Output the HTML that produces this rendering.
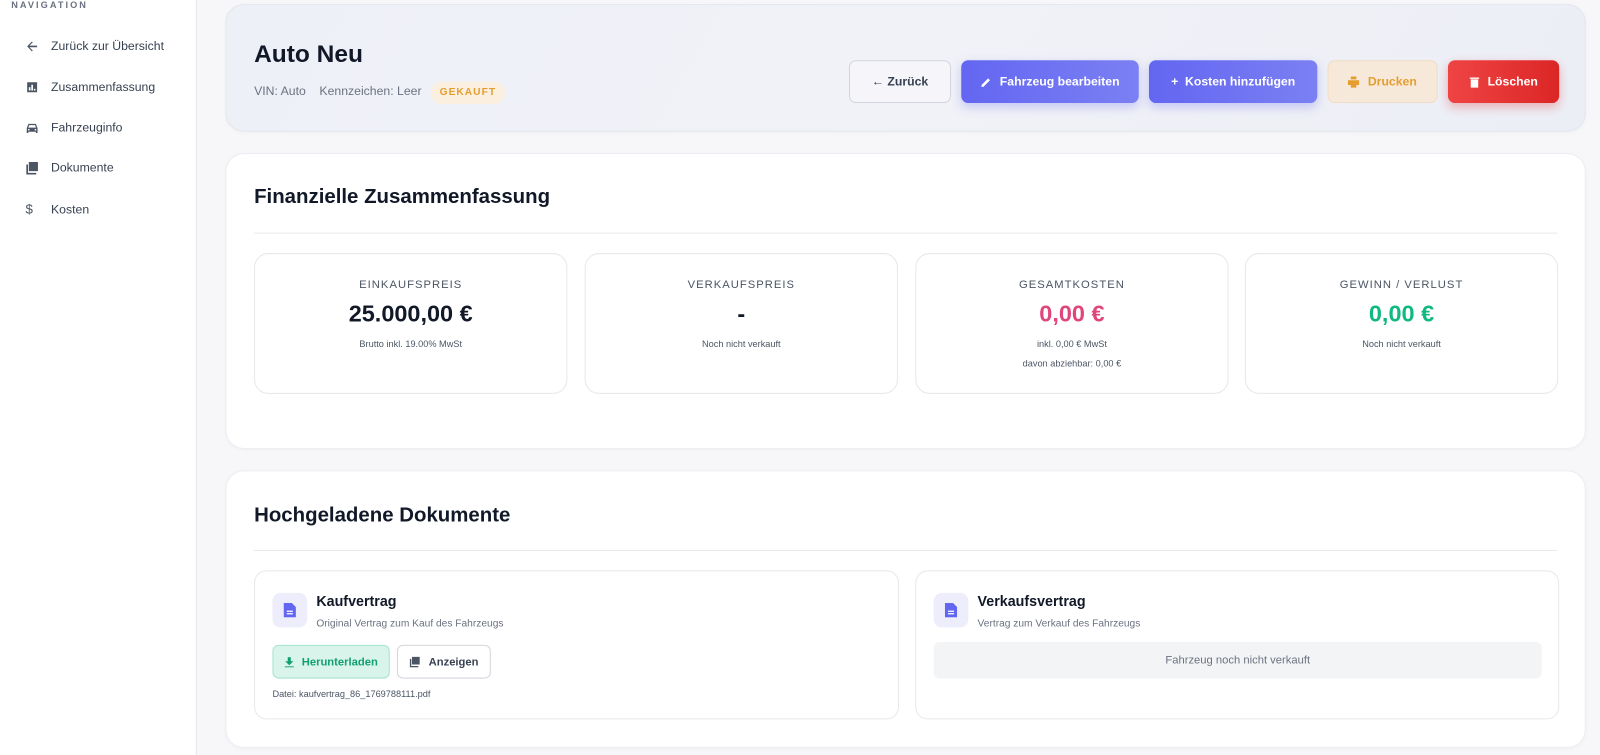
<!DOCTYPE html>
<html><head><meta charset="utf-8"><style>
*{box-sizing:border-box;margin:0;padding:0}
body{width:1600px;height:755px;overflow:hidden;background:#f7f7f9;font-family:"Liberation Sans",Arial,sans-serif;color:#111827}
.wrap{position:absolute;left:0;top:0;width:1568px;height:740px;transform:scale(1.0204);transform-origin:0 0}
.side{position:absolute;left:0;top:0;width:193px;height:740px;background:#fff;border-right:1px solid #e5e7eb}
.nav-h{position:absolute;left:11px;top:0;font-size:9px;font-weight:bold;letter-spacing:2px;color:#6b7280}
.ni{position:absolute;left:25px;font-size:12px;color:#374151;display:flex;align-items:center}
.ni svg{width:13px;height:13px;margin-right:12px;fill:#4b5563}
.card{position:absolute;background:#fff;border:1px solid #eceef2;border-radius:18px;box-shadow:0 1px 4px rgba(0,0,0,.03)}
.hdr{left:221px;top:4px;width:1333px;height:125px;background:linear-gradient(120deg,#eef0f8,#f1f2f7 50%,#eceef6);border:1px solid #e3e5ee}
h1{position:absolute;left:27px;top:35px;font-size:24px;font-weight:bold}
.meta{position:absolute;left:27px;top:77px;font-size:12px;color:#6b7280}
.badge{position:absolute;left:200px;top:75px;width:73px;height:22px;border-radius:11px;background:#fbefe0;color:#e59e2e;font-size:10px;font-weight:bold;letter-spacing:1px;text-align:center;line-height:22px}
.btn{position:absolute;top:54px;height:42px;border-radius:7px;font-size:12px;font-weight:bold;display:flex;align-items:center;justify-content:center;gap:8px}
.sec-t{position:absolute;left:27px;font-size:20px;font-weight:bold}
.hr{position:absolute;left:27px;right:27px;height:1px;background:#e7e8ec}
.stat{position:absolute;top:97px;width:307px;height:138px;border:1px solid #e7e8ec;border-radius:14px;text-align:center}
.stat .l{margin-top:24px;font-size:11px;letter-spacing:1px;color:#4b5563}
.stat .v{margin-top:9px;font-size:23px;font-weight:bold}
.stat .s{margin-top:11px;font-size:9px;color:#4b5563}
.doc{position:absolute;top:97px;width:632px;height:146px;border:1px solid #e7e8ec;border-radius:12px}
.ic{position:absolute;left:17px;top:21px;width:34px;height:34px;border-radius:8px;background:#eeedfc;display:flex;align-items:center;justify-content:center}
.dt{position:absolute;left:60px;top:21px;font-size:14px;font-weight:bold}
.ds{position:absolute;left:60px;top:46px;font-size:10px;color:#6b7280}
</style></head><body><div class="wrap">
<div class="side">
<div class="nav-h">NAVIGATION</div>
<div class="ni" style="top:38px"><svg viewBox="0 0 16 16"><path d="M14 7H4.8l4-4-1.1-1L2 8l5.7 6 1.1-1-4-4H14z"/></svg>Zurück zur Übersicht</div>
<div class="ni" style="top:78px"><svg viewBox="0 0 16 16"><path d="M2 2h12v12H2zM4 8v4h2V8zm3-3v7h2V5zm3 5v2h2v-2z" fill-rule="evenodd"/></svg>Zusammenfassung</div>
<div class="ni" style="top:118px"><svg viewBox="0 0 16 16"><path d="M3.5 3h9l2 5v6h-2v-1.5h-9V14h-2V8zm1 1.5L3.3 7.5h9.4l-1.2-3zM4 9a1 1 0 100 2 1 1 0 000-2zm8 0a1 1 0 100 2 1 1 0 000-2z"/></svg>Fahrzeuginfo</div>
<div class="ni" style="top:157px"><svg viewBox="0 0 16 16"><path d="M4 1h11v11H4zM1 4h2v10h10v2H1z"/></svg>Dokumente</div>
<div class="ni" style="top:197px"><span style="width:13px;margin-right:12px;font-size:13px;color:#4b5563">$</span>Kosten</div>
</div>

<div class="card hdr">
<h1>Auto Neu</h1>
<div class="meta">VIN: Auto &nbsp;&nbsp; Kennzeichen: Leer</div>
<div class="badge">GEKAUFT</div>
<div class="btn" style="left:610px;width:100px;background:#f6f6fa;border:1px solid #d4d6dd;color:#374151">← Zurück</div>
<div class="btn" style="left:720px;width:174px;background:linear-gradient(90deg,#6366f1,#7b80f3);color:#fff;box-shadow:0 4px 10px rgba(99,102,241,.3)"><svg width="11" height="11" viewBox="0 0 12 12"><path d="M1 9l7-7 2 2-7 7H1z" fill="#fff"/></svg>Fahrzeug bearbeiten</div>
<div class="btn" style="left:904px;width:165px;background:linear-gradient(90deg,#6366f1,#7b80f3);color:#fff;box-shadow:0 4px 10px rgba(99,102,241,.3)">+ &nbsp;Kosten hinzufügen</div>
<div class="btn" style="left:1079px;width:108px;background:#f7e9da;border:1px solid #f0dcc4;color:#e59e2e"><svg width="11" height="11" viewBox="0 0 12 12"><path d="M3 0h6v3H3zM0 4h12v5H9v3H3V9H0z" fill="#e59e2e"/></svg>Drucken</div>
<div class="btn" style="left:1197px;width:109px;background:linear-gradient(90deg,#ef4444,#dc2626);color:#fff;box-shadow:0 4px 10px rgba(220,38,38,.3)"><svg width="10" height="11" viewBox="0 0 10 12"><path d="M0 1h10v1.5H0zM1 3h8v9H1z" fill="#fff"/></svg>Löschen</div>
</div>

<div class="card" style="left:221px;top:150px;width:1333px;height:290px">
<div class="sec-t" style="top:31px">Finanzielle Zusammenfassung</div>
<div class="hr" style="top:77px"></div>
<div class="stat" style="left:27px"><div class="l">EINKAUFSPREIS</div><div class="v">25.000,00 €</div><div class="s">Brutto inkl. 19.00% MwSt</div></div>
<div class="stat" style="left:351px"><div class="l">VERKAUFSPREIS</div><div class="v">-</div><div class="s">Noch nicht verkauft</div></div>
<div class="stat" style="left:675px"><div class="l">GESAMTKOSTEN</div><div class="v" style="color:#e0457b">0,00 €</div><div class="s">inkl. 0,00 € MwSt</div><div class="s" style="margin-top:9px">davon abziehbar: 0,00 €</div></div>
<div class="stat" style="left:998px"><div class="l">GEWINN / VERLUST</div><div class="v" style="color:#10b981">0,00 €</div><div class="s">Noch nicht verkauft</div></div>
</div>

<div class="card" style="left:221px;top:461px;width:1333px;height:272px">
<div class="sec-t" style="top:32px">Hochgeladene Dokumente</div>
<div class="hr" style="top:77px"></div>
<div class="doc" style="left:27px">
<div class="ic"><svg width="12" height="14" viewBox="0 0 12 14"><path d="M0 0h8l4 4v10H0z" fill="#6366f1"/><path d="M3 8h6M3 10.5h6" stroke="#fff" stroke-width="1.2"/></svg></div>
<div class="dt">Kaufvertrag</div><div class="ds">Original Vertrag zum Kauf des Fahrzeugs</div>
<div style="position:absolute;left:17px;top:72px;width:115px;height:33px;border-radius:6px;background:#d9f4ea;border:1px solid #a7e4cc;color:#10a070;font-size:11px;font-weight:bold;display:flex;align-items:center;justify-content:center;gap:8px"><svg width="9" height="10" viewBox="0 0 9 10"><path d="M3 0h3v4h2.5L4.5 8 .5 4H3zM0 9h9v1H0z" fill="#10a070"/></svg>Herunterladen</div>
<div style="position:absolute;left:139px;top:72px;width:92px;height:33px;border-radius:6px;background:#fff;border:1px solid #d4d6dd;color:#374151;font-size:11px;font-weight:bold;display:flex;align-items:center;justify-content:center;gap:8px"><svg width="11" height="11" viewBox="0 0 16 16"><path d="M4 1h11v11H4zM1 4h2v10h10v2H1z" fill="#4b5563"/></svg>Anzeigen</div>
<div style="position:absolute;left:17px;top:115px;font-size:9px;color:#4b5563">Datei: kaufvertrag_86_1769788111.pdf</div>
</div>
<div class="doc" style="left:675px;width:631px">
<div class="ic"><svg width="12" height="14" viewBox="0 0 12 14"><path d="M0 0h8l4 4v10H0z" fill="#6366f1"/><path d="M3 8h6M3 10.5h6" stroke="#fff" stroke-width="1.2"/></svg></div>
<div class="dt">Verkaufsvertrag</div><div class="ds">Vertrag zum Verkauf des Fahrzeugs</div>
<div style="position:absolute;left:17px;top:69px;width:596px;height:36px;border-radius:6px;background:#f3f4f6;color:#6b7280;font-size:11px;text-align:center;line-height:36px">Fahrzeug noch nicht verkauft</div>
</div>
</div>
</div></body></html>
